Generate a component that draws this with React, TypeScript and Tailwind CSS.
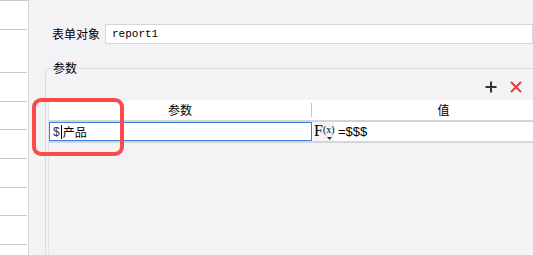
import React from 'react';

const cjk = "font-['Noto_Sans_CJK_SC','Noto_Sans',sans-serif]";

const SideRows: React.FC = () => {
    const heights = [29, 43, 29, 28, 29, 29, 28, 29, 20];
    return (
        <div className="w-[29px] h-full bg-white border-r border-[#d8d8dc] flex flex-col border-t border-t-[#c8c8c8]">
            {heights.map((h, i) => (
                <div key={i} style={{ height: h }} className="border-b border-[#c9c9c9] shrink-0 mr-[1px]" />
            ))}
        </div>
    );
};

const App: React.FC = () => {
    return (
        <div className={`relative w-[533px] h-[255px] overflow-hidden flex bg-[#f3f3f6] text-[12px] text-black ${cjk}`}>
            <SideRows />

            <div className="flex-1 flex flex-col min-w-0">
                {/* form object */}
                <div className="flex items-center h-[20px] mt-[24px] pl-[23px]">
                    <span className="w-[53px] leading-none">表单对象</span>
                    <div className="flex-1 h-[20px] bg-white border border-[#d6d6da] flex items-center pl-[6px]">
                        <span className="font-['Liberation_Mono',monospace] text-[11px] leading-none">report1</span>
                    </div>
                </div>

                {/* parameters group */}
                <div className="relative flex-1 flex flex-col mt-[24px] ml-[16px] border-t border-l border-[#dcdcdf] rounded-tl-[5px]">
                    <span className="absolute -top-[8px] left-[6px] px-[1px] bg-[#f3f3f6] leading-[14px]">参数</span>

                    <div className="flex justify-end items-center gap-[13px] pr-[11px] mt-[12px] h-[12px]">
                        <svg width="12" height="12" viewBox="0 0 12 12">
                            <path d="M6 0.5V11.5M0.5 6H11.5" stroke="#333" strokeWidth="2" />
                        </svg>
                        <svg width="12" height="12" viewBox="0 0 12 12">
                            <path d="M1 1L11 11M11 1L1 11" stroke="#ec3b36" strokeWidth="2" />
                        </svg>
                    </div>

                    <div className="flex-1 flex flex-col mt-[7px] ml-[2px] w-[527px] border-l border-[#e4e4e8]">
                        {/* header */}
                        <div className="flex items-center h-[22px] bg-white border-b-2 border-[#d5d5d8]">
                            <div className="w-[262px] text-center leading-none">参数</div>
                            <div className="w-px h-[14px] bg-[#c4c4c4]" />
                            <div className="flex-1 text-center leading-none">值</div>
                        </div>
                        {/* row */}
                        <div className="flex items-center h-[21px] bg-white border-b-2 border-[#d5d5d8]">
                            <div className="w-[263px] h-[19px] border border-[#3b7ddb] flex items-center pl-[3px]">
                                <span className="text-[#333] leading-none font-['Liberation_Sans',sans-serif]">$</span>
                                <span className="w-px h-[14px] bg-black mx-[1px]" />
                                <span className="leading-none">产品</span>
                            </div>
                            <div className="relative w-[21px] h-[19px] bg-[#f4f4f4] flex items-start pl-[1px] ml-[1px]">
                                <span className="font-['Liberation_Serif',serif] text-[16px] leading-[17px]">F</span>
                                <span className="font-['Liberation_Serif',serif] text-[10px] leading-[16px]">(x)</span>
                                <svg className="absolute right-[2px] bottom-[1px]" width="5" height="3" viewBox="0 0 5 3">
                                    <path d="M0 0H5L2.5 3Z" fill="#333" />
                                </svg>
                            </div>
                            <span className="ml-[4px] leading-none font-['Liberation_Sans',sans-serif] text-[13px]">=$$$</span>
                        </div>
                    </div>
                </div>
            </div>

            {/* highlight */}
            <div className="absolute left-[32px] top-[98px] w-[92px] h-[58px] border-4 border-[#fa4b4b] rounded-[9px]" />
        </div>
    );
};

export default App;
